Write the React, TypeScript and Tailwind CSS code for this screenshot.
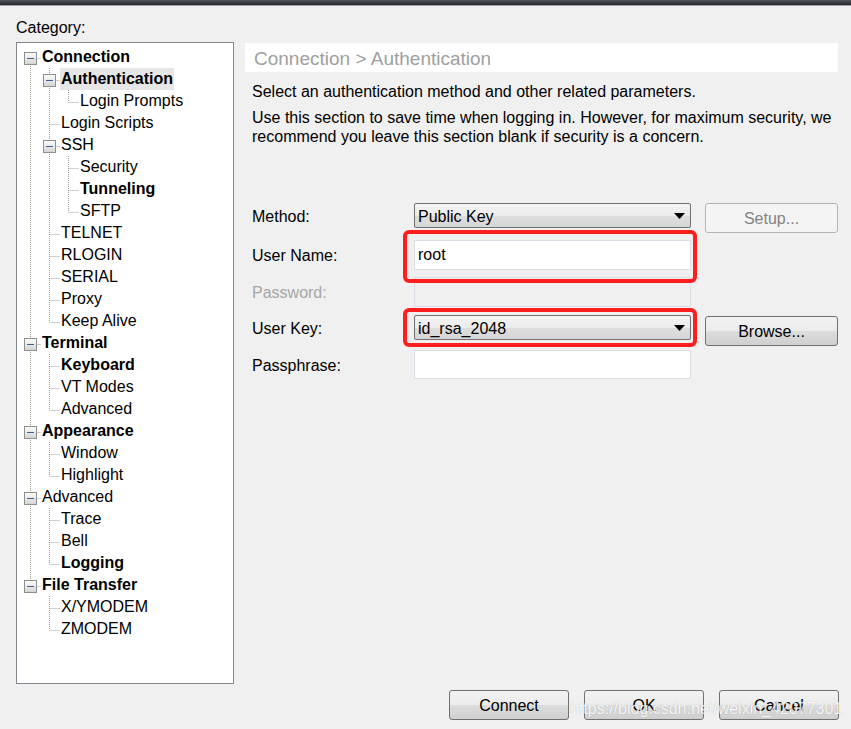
import React from 'react';

type Node = { label: string; level: number; bold?: boolean; exp?: boolean; selected?: boolean };

const tree: Node[] = [
  { label: 'Connection', level: 0, bold: true, exp: true },
  { label: 'Authentication', level: 1, bold: true, exp: true, selected: true },
  { label: 'Login Prompts', level: 2 },
  { label: 'Login Scripts', level: 1 },
  { label: 'SSH', level: 1, exp: true },
  { label: 'Security', level: 2 },
  { label: 'Tunneling', level: 2, bold: true },
  { label: 'SFTP', level: 2 },
  { label: 'TELNET', level: 1 },
  { label: 'RLOGIN', level: 1 },
  { label: 'SERIAL', level: 1 },
  { label: 'Proxy', level: 1 },
  { label: 'Keep Alive', level: 1 },
  { label: 'Terminal', level: 0, bold: true, exp: true },
  { label: 'Keyboard', level: 1, bold: true },
  { label: 'VT Modes', level: 1 },
  { label: 'Advanced', level: 1 },
  { label: 'Appearance', level: 0, bold: true, exp: true },
  { label: 'Window', level: 1 },
  { label: 'Highlight', level: 1 },
  { label: 'Advanced', level: 0, exp: true },
  { label: 'Trace', level: 1 },
  { label: 'Bell', level: 1 },
  { label: 'Logging', level: 1, bold: true },
  { label: 'File Transfer', level: 0, bold: true, exp: true },
  { label: 'X/YMODEM', level: 1 },
  { label: 'ZMODEM', level: 1 },
];

function hasNext(i: number) {
  const lv = tree[i].level;
  for (let j = i + 1; j < tree.length; j++) {
    if (tree[j].level < lv) return false;
    if (tree[j].level === lv) return true;
  }
  return false;
}

function ancestorAt(i: number, lv: number) {
  for (let j = i - 1; j >= 0; j--) if (tree[j].level === lv) return j;
  return -1;
}

// connector lines + expander box for one row
function Guides({ i }: { i: number }) {
  const n = tree[i];
  const L = n.level;
  const w = 19 * L + 24;
  const cx = 13 + 19 * L + 0.5;
  const dot = { stroke: '#a0a0a0', strokeDasharray: '1 1', strokeWidth: 1 };
  const lines: React.ReactNode[] = [];
  for (let k = 0; k < L; k++) {
    const a = ancestorAt(i, k);
    if (a >= 0 && hasNext(a)) {
      const x = 13 + 19 * k + 0.5;
      lines.push(<line key={'v' + k} x1={x} y1={0} x2={x} y2={22} {...dot} />);
    }
  }
  if (L > 0 || i > 0) lines.push(<line key="top" x1={cx} y1={0} x2={cx} y2={12} {...dot} />);
  if (hasNext(i)) lines.push(<line key="bot" x1={cx} y1={12} x2={cx} y2={22} {...dot} />);
  lines.push(<line key="h" x1={cx} y1={12.5} x2={w} y2={12.5} {...dot} />);
  return (
    <svg width={w} height={22} className="shrink-0">
      <defs>
        <linearGradient id="expg" x1="0" y1="0" x2="0" y2="1">
          <stop offset="0" stopColor="#ffffff" />
          <stop offset="1" stopColor="#d2d2d2" />
        </linearGradient>
      </defs>
      {lines}
      {n.exp && (
        <g>
          <rect x={cx - 6} y={6.5} width={12} height={12} fill="url(#expg)" stroke="#8e8f8f" />
          <line x1={cx - 3.5} y1={12.5} x2={cx + 3.5} y2={12.5} stroke="#3d5c98" strokeWidth={1} />
        </g>
      )}
    </svg>
  );
}

function Combo({ value }: { value: string }) {
  return (
    <div className="w-[277px] h-[25px] border border-[#707070] rounded-[2px] bg-[linear-gradient(#f3f3f3_0%,#ececec_50%,#dedede_51%,#d6d6d6_100%)] flex items-center justify-between pl-[3px] pr-[5px]">
      <span className="pt-[2px]">{value}</span>
      <svg width="11" height="6" viewBox="0 0 11 6">
        <path d="M0 0h11L5.5 6z" fill="#000" />
      </svg>
    </div>
  );
}

function Btn({ children, disabled, className = '' }: { children: React.ReactNode; disabled?: boolean; className?: string }) {
  return (
    <div
      className={
        'h-[30px] rounded-[3px] border flex items-center justify-center pt-[2px] ' +
        (disabled
          ? 'border-[#b5b5b5] bg-[#f4f4f4] text-[#838383] '
          : 'border-[#707070] bg-[linear-gradient(#f2f2f2_0%,#ebebeb_50%,#dddddd_51%,#cfcfcf_100%)] ') +
        className
      }
    >
      {children}
    </div>
  );
}

export default function App() {
  return (
    <div className="w-[851px] h-[729px] bg-[#f0f0f0] flex flex-col font-['Liberation_Sans',Arial,sans-serif] text-[16px] leading-[18px] text-black overflow-hidden relative">
      <div className="h-[5px] bg-gradient-to-b from-[#50565c] to-[#24282d]" />
      <div className="h-[1px] bg-[#9ca1a6]" />

      <div className="flex pl-[16px]">
        {/* category tree */}
        <div className="w-[218px] flex flex-col">
          <div className="h-[36px] pt-[13px]">Category:</div>
          <div className="h-[642px] border border-[#828790] bg-white pt-[3px]">
            {tree.map((n, i) => (
              <div key={i} className="h-[22px] flex items-center">
                <Guides i={i} />
                <span
                  className={
                    'h-[22px] leading-[22px] px-[1px] whitespace-nowrap ' +
                    (n.bold ? 'font-bold ' : '') +
                    (n.selected ? 'bg-[#e6e6e6]' : '')
                  }
                >
                  {n.label}
                </span>
              </div>
            ))}
          </div>
        </div>

        {/* settings panel */}
        <div className="ml-[11px] w-[593px] pt-[37px] flex flex-col relative">
          <div className="h-[29px] bg-white flex items-center pl-[9px] pt-[2px] text-[#a0a0a0] text-[19px]">
            Connection &gt; Authentication
          </div>
          <p className="mt-[11px] pl-[7px]">Select an authentication method and other related parameters.</p>
          <p className="mt-[7px] pl-[7px] leading-[19px]">
            Use this section to save time when logging in. However, for maximum security, we
            <br />
            recommend you leave this section blank if security is a concern.
          </p>

          <div className="mt-[57px] flex flex-col">
            <div className="flex items-start">
              <div className="w-[169px] h-[25px] pl-[7px] pt-[3px] flex items-center">Method:</div>
              <Combo value="Public Key" />
              <Btn disabled className="ml-[14px] w-[133px]">Setup...</Btn>
            </div>
            <div className="flex mt-[7px]">
              <div className="w-[169px] h-[30px] pl-[7px] pt-[2px] flex items-center">User Name:</div>
              <div className="w-[277px] h-[30px] bg-white border border-[#dadde3] flex items-center pl-[3px]">root</div>
            </div>
            <div className="flex mt-[7px]">
              <div className="w-[169px] h-[30px] pl-[7px] pt-[2px] flex items-center text-[#a6a6a6]">Password:</div>
              <div className="w-[277px] h-[30px] border border-[#dadde3]" />
            </div>
            <div className="flex items-start mt-[8px]">
              <div className="w-[169px] h-[25px] pl-[7px] pt-[3px] flex items-center">User Key:</div>
              <Combo value="id_rsa_2048" />
              <Btn className="ml-[14px] mt-[1px] w-[133px]">Browse...</Btn>
            </div>
            <div className="flex mt-[4px]">
              <div className="w-[169px] h-[29px] pl-[7px] pt-[2px] flex items-center">Passphrase:</div>
              <div className="w-[277px] h-[29px] bg-white border border-[#dadde3]" />
            </div>
          </div>

          {/* red highlight marks */}
          <div className="absolute left-[158px] top-[224px] w-[294px] h-[53px] border-[4px] border-[#ff1e1e] rounded-[6px]" />
          <div className="absolute left-[158px] top-[302px] w-[294px] h-[39px] border-[4px] border-[#ff1e1e] rounded-[6px]" />
        </div>
      </div>

      <div className="mt-[6px] flex justify-end gap-[15px] pr-[12px]">
        <Btn className="w-[120px]">Connect</Btn>
        <Btn className="w-[120px]">OK</Btn>
        <Btn className="w-[120px]">Cancel</Btn>
      </div>

      {/* watermark over the buttons */}
      <div className="absolute left-[570px] top-[700px] text-white [text-shadow:0_0_1px_#9a9a9a] opacity-80 whitespace-nowrap">
        https://blog.csdn.net/weixin_42077301
      </div>
    </div>
  );
}
